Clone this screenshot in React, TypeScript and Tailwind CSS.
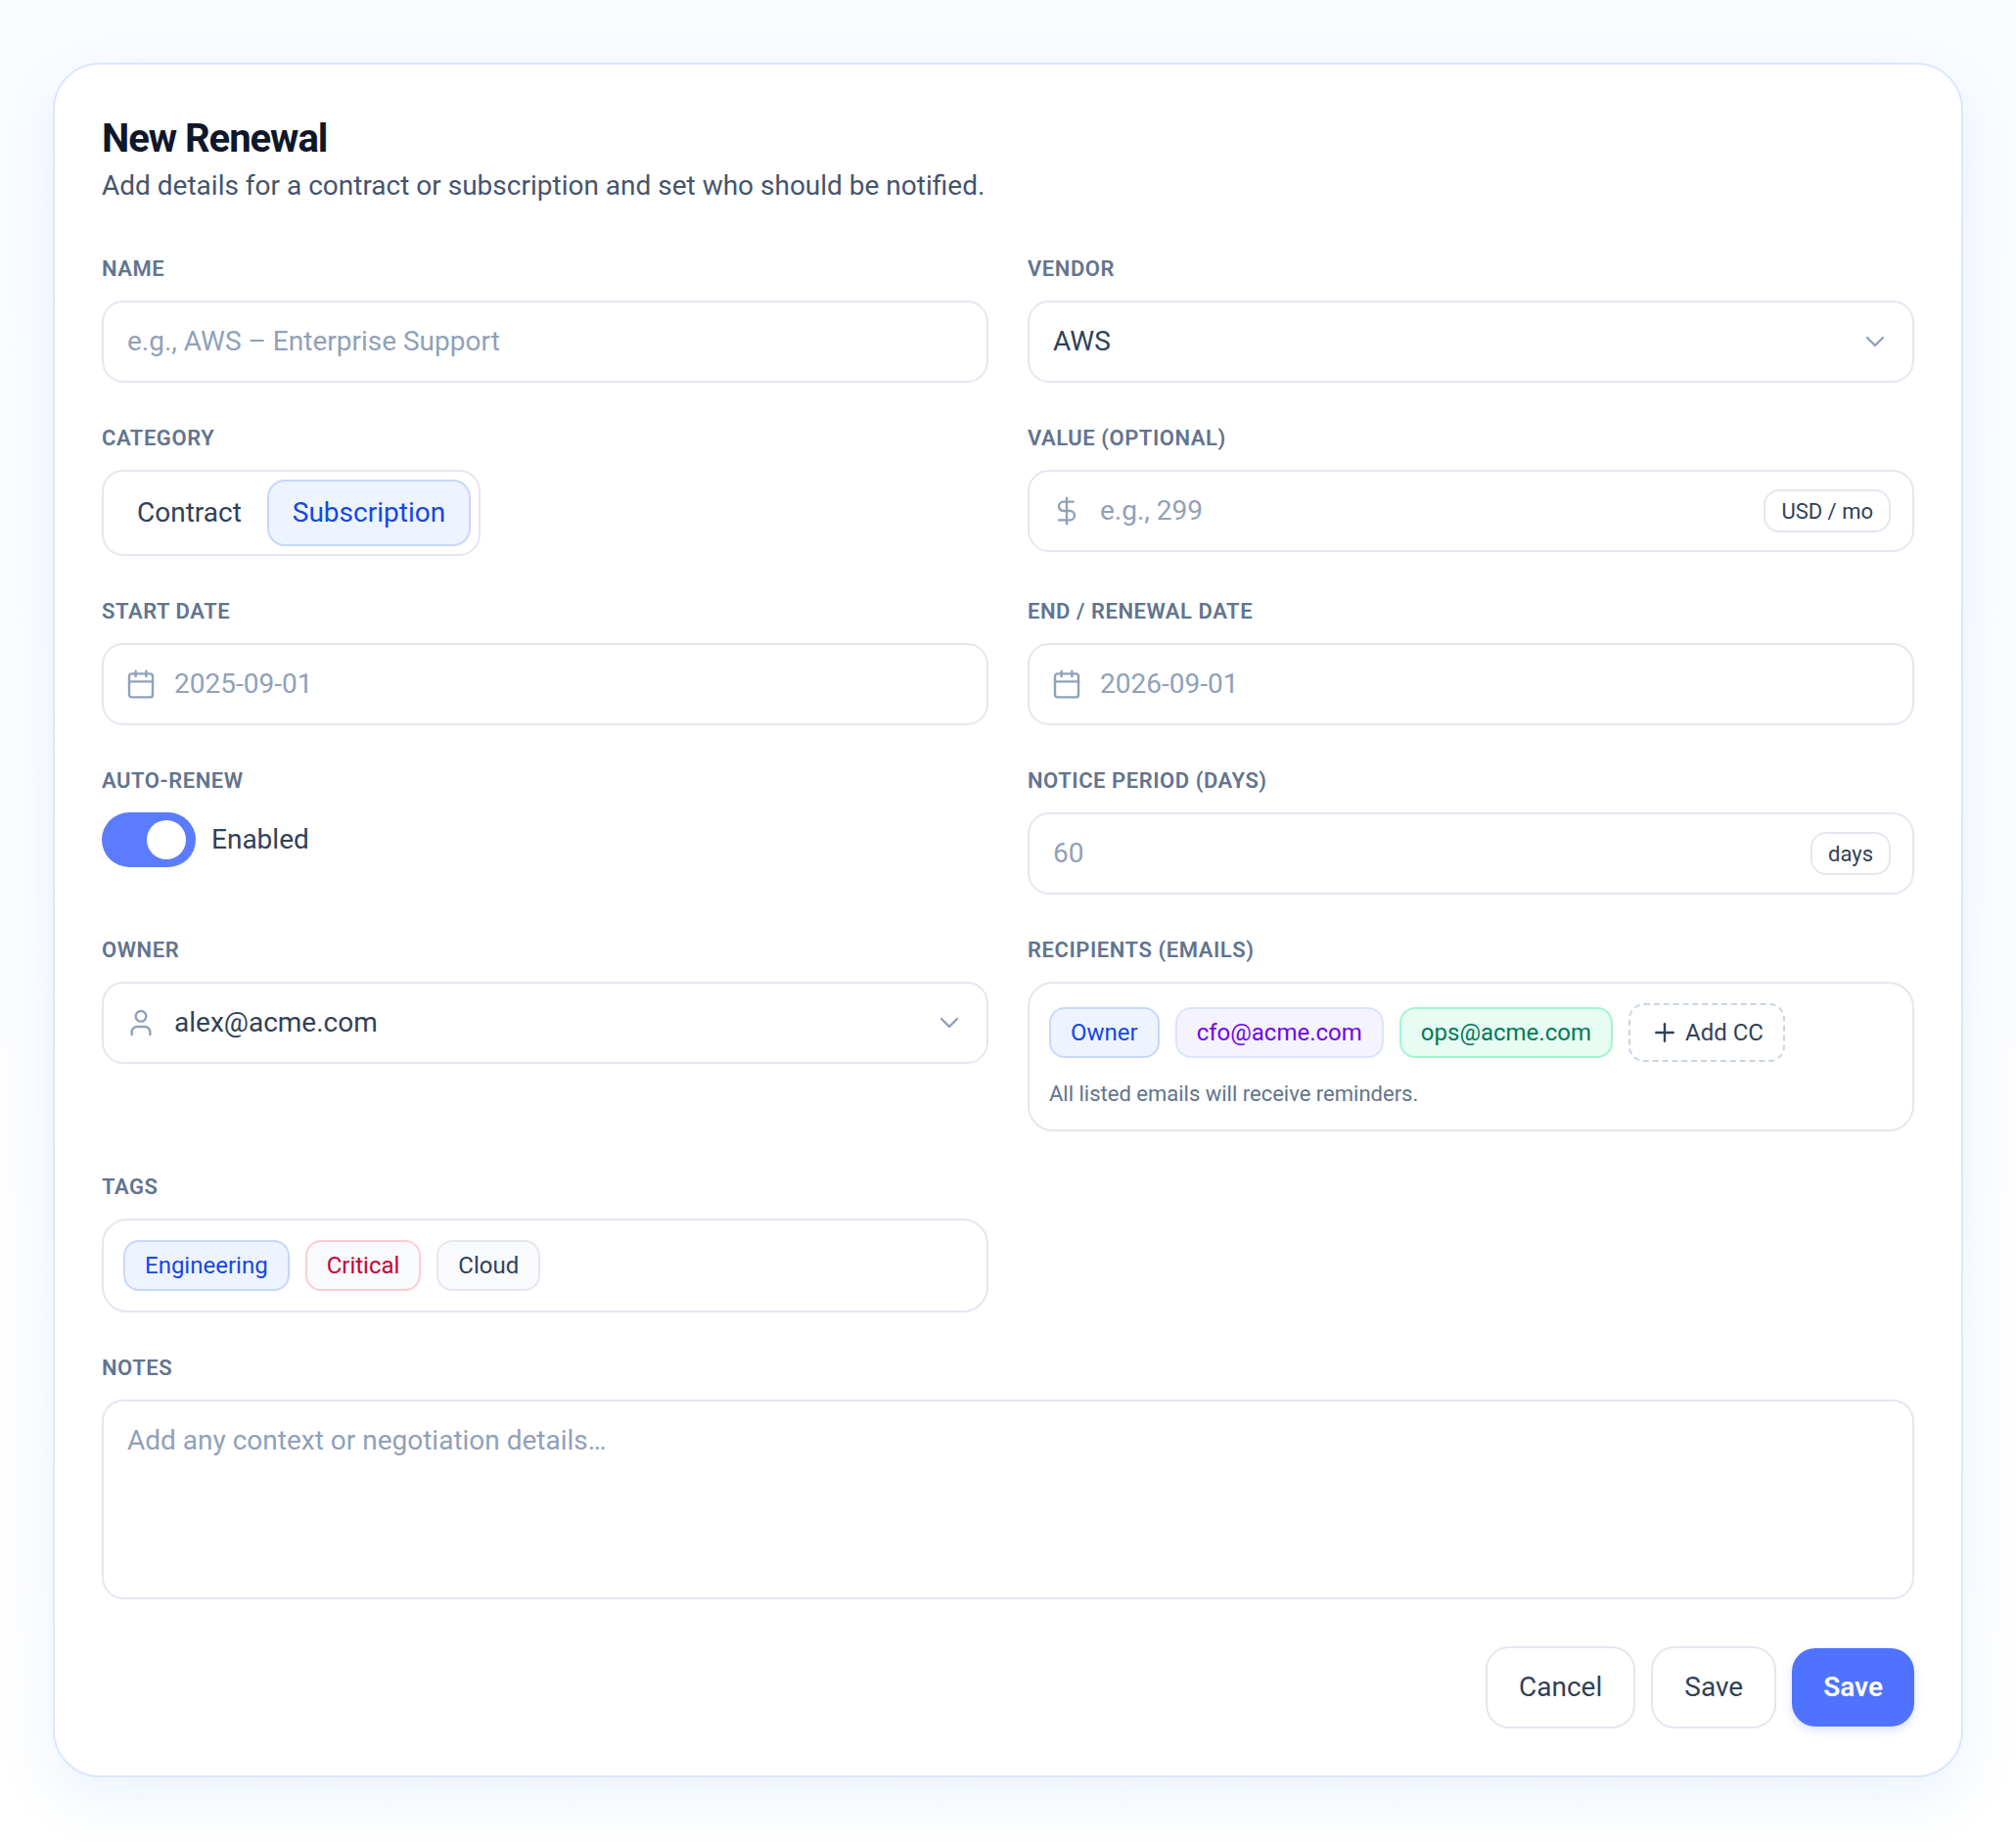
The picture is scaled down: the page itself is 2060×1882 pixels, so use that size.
import { Calendar, ChevronDown, DollarSign, Plus, User } from "lucide-react";
import type { ReactNode } from "react";

function Label({ children }: { children: ReactNode }) {
  return (
    <div className="mb-[17px] h-[30px] text-[22px] leading-[30px] font-semibold tracking-[0.55px] uppercase text-slate-500">
      {children}
    </div>
  );
}

function Box({ children, className = "" }: { children: ReactNode; className?: string }) {
  return (
    <div
      className={
        "flex h-[84px] items-center rounded-[22px] border-2 border-[#e5e7ef] bg-white px-6 text-[28px] " +
        className
      }
    >
      {children}
    </div>
  );
}

function Suffix({ children }: { children: ReactNode }) {
  return (
    <span className="flex h-[44px] items-center rounded-[16px] border-2 border-[#e5e7ef] bg-white px-4 text-[22px] text-slate-700">
      {children}
    </span>
  );
}

function Chip({ children, className }: { children: ReactNode; className: string }) {
  return (
    <span className={"flex h-[52px] items-center rounded-[16px] border-2 px-5 text-[24px] " + className}>
      {children}
    </span>
  );
}

const iconClass = "mr-[18px] -ml-[2px] shrink-0 text-slate-400";

export default function App() {
  return (
    <div className="min-h-[1882px] bg-gradient-to-b from-[#fafcff] to-white pt-[64px] font-['Roboto',sans-serif]">
      <div className="mx-[54px] h-[1752px] rounded-[48px] border-2 border-[#dbe7fd] bg-white px-[48px] pt-[51px] shadow-[0_20px_60px_rgba(59,130,246,0.1)]">
        <h1 className="text-[40px] leading-[50px] font-bold tracking-[-1.04px] text-slate-900">New Renewal</h1>
        <p className="mt-[3px] text-[28px] leading-[40px] text-slate-600">
          Add details for a contract or subscription and set who should be notified.
        </p>

        <div className="mt-[50px] grid grid-cols-2 items-start gap-x-10 gap-y-[42px]">
          <div>
            <Label>Name</Label>
            <Box>
              <span className="text-slate-400">e.g., AWS – Enterprise Support</span>
            </Box>
          </div>
          <div>
            <Label>Vendor</Label>
            <Box className="justify-between">
              <span className="text-slate-700">AWS</span>
              <ChevronDown size={32} strokeWidth={1.8} className="-mr-[2px] text-slate-400" />
            </Box>
          </div>

          <div>
            <Label>Category</Label>
            <div className="inline-flex h-[88px] items-center gap-[2px] rounded-[22px] border-2 border-[#e5e7ef] bg-white pr-[8px] pl-[10px]">
              <span className="flex h-[68px] items-center px-6 text-[28px] text-slate-700">Contract</span>
              <span className="flex h-[68px] items-center rounded-[18px] border-2 border-[#c7d7fe] bg-[#eef4ff] px-6 text-[28px] text-blue-700">
                Subscription
              </span>
            </div>
          </div>
          <div>
            <Label>Value (optional)</Label>
            <Box className="justify-between pr-[22px]">
              <span className="flex items-center">
                <DollarSign size={32} strokeWidth={1.8} className={iconClass} />
                <span className="text-slate-400">e.g., 299</span>
              </span>
              <Suffix>USD / mo</Suffix>
            </Box>
          </div>

          <div>
            <Label>Start date</Label>
            <Box>
              <Calendar size={32} strokeWidth={1.8} className={iconClass} />
              <span className="text-slate-400">2025-09-01</span>
            </Box>
          </div>
          <div>
            <Label>End / renewal date</Label>
            <Box>
              <Calendar size={32} strokeWidth={1.8} className={iconClass} />
              <span className="text-slate-400">2026-09-01</span>
            </Box>
          </div>

          <div>
            <Label>Auto-renew</Label>
            <div className="flex items-center gap-4">
              <span className="relative h-[56px] w-[96px] rounded-full bg-[#5b7cff]">
                <span className="absolute top-[8px] right-[10px] h-[40px] w-[40px] rounded-full bg-white" />
              </span>
              <span className="text-[28px] text-slate-700">Enabled</span>
            </div>
          </div>
          <div>
            <Label>Notice period (days)</Label>
            <Box className="justify-between pr-[22px]">
              <span className="text-slate-400">60</span>
              <Suffix>days</Suffix>
            </Box>
          </div>

          <div>
            <Label>Owner</Label>
            <Box className="justify-between">
              <span className="flex items-center">
                <User size={32} strokeWidth={1.8} className={iconClass} />
                <span className="text-slate-700">alex@acme.com</span>
              </span>
              <ChevronDown size={32} strokeWidth={1.8} className="-mr-[2px] text-slate-400" />
            </Box>
          </div>
          <div>
            <Label>Recipients (emails)</Label>
            <div className="h-[153px] rounded-[26px] border-2 border-[#e5e7ef] bg-white px-5 pt-[20px]">
              <div className="flex items-center gap-4">
                <Chip className="border-[#c7d7fe] bg-[#eef4ff] text-blue-700">Owner</Chip>
                <Chip className="border-[#dbe5fd] bg-violet-50 text-violet-700">cfo@acme.com</Chip>
                <Chip className="border-emerald-200 bg-[#e7fcf3] text-emerald-700">ops@acme.com</Chip>
                <span className="flex h-[60px] items-center gap-[6px] rounded-[16px] border-2 border-dashed border-slate-300 px-5 text-[24px] text-slate-700">
                  <Plus size={30} strokeWidth={1.9} />
                  Add CC
                </span>
              </div>
              <p className="mt-[18px] text-[22px] leading-[30px] text-slate-500">All listed emails will receive reminders.</p>
            </div>
          </div>

          <div>
            <Label>Tags</Label>
            <div className="flex h-[96px] items-center gap-4 rounded-[26px] border-2 border-[#e5e7ef] bg-white px-5">
              <Chip className="border-[#c7d7fe] bg-[#eef4ff] text-blue-700">Engineering</Chip>
              <Chip className="border-rose-200 bg-slate-50 text-rose-700">Critical</Chip>
              <Chip className="border-[#e5e7ef] bg-slate-50 text-slate-700">Cloud</Chip>
            </div>
          </div>
          <div />

          <div className="col-span-2">
            <Label>Notes</Label>
            <div className="h-[204px] rounded-[22px] border-2 border-[#e5e7ef] bg-white px-6 pt-[20px] text-[28px] leading-[40px] text-slate-400">
              Add any context or negotiation details…
            </div>
          </div>
        </div>

        <div className="mt-[48px] flex items-center justify-end gap-4">
          <button className="h-[84px] rounded-[24px] border-2 border-[#e5e7ef] bg-white px-8 text-[28px] text-slate-700">Cancel</button>
          <button className="h-[84px] rounded-[24px] border-2 border-[#e5e7ef] bg-white px-8 text-[28px] text-slate-700">Save</button>
          <button className="h-[80px] rounded-[24px] bg-[#4f73ff] px-8 text-[28px] font-semibold text-white shadow-[0_4px_10px_rgba(79,115,255,0.2)]">Save</button>
        </div>
      </div>
    </div>
  );
}
